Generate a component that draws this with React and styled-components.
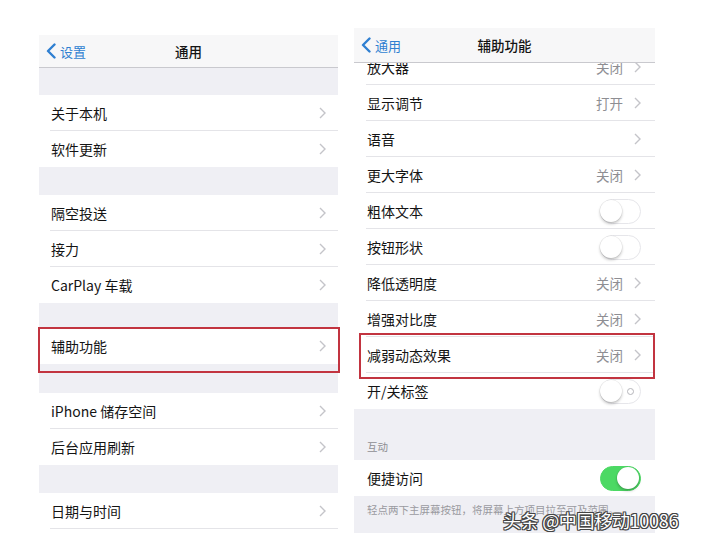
import React from "react";
import styled, { createGlobalStyle } from "styled-components";

const Global = createGlobalStyle`
  html, body { margin: 0; padding: 0; background: #ffffff; }
  body { font-family: "Noto Sans CJK SC", "Noto Sans", sans-serif; color: #111; }
`;

const Page = styled.div`
  position: relative;
  width: 701px;
  height: 544px;
  overflow: hidden;
  display: flex;
  align-items: flex-start;
  gap: 16px;
  padding-left: 39px;
  box-sizing: border-box;
`;

const Panel = styled.div`
  width: ${(p) => p.$w}px;
  margin-top: ${(p) => p.$top}px;
  background: #efeff4;
  display: flex;
  flex-direction: column;
`;

const NavBar = styled.div`
  height: ${(p) => p.$h}px;
  background: #f7f7f8;
  border-bottom: 1px solid #c9c9ce;
  display: grid;
  grid-template-columns: 1fr auto 1fr;
  align-items: center;
  box-sizing: border-box;
  position: relative;
  z-index: 2;
`;

const Back = styled.div`
  display: flex;
  align-items: center;
  gap: 4px;
  padding-left: 7px;
  color: #2f7fd1;
  font-size: 13px;
`;

const Title = styled.div`
  font-size: 13.5px;
  font-weight: 500;
  color: #141414;
`;

const Gap = styled.div`
  height: ${(p) => p.$h}px;
  background: #efeff4;
  display: flex;
  align-items: flex-end;
  padding: 0 13px ${(p) => (p.$label ? 6 : 0)}px;
  font-size: 10.5px;
  color: #8e8e93;
  box-sizing: border-box;
`;

const Footer = styled.div`
  height: 37px;
  background: #efeff4;
  padding: 6px 13px 0;
  box-sizing: border-box;
  font-size: 10.5px;
  color: #9a9aa0;
`;

const Group = styled.div`
  background: #fff;
  display: flex;
  flex-direction: column;
`;

const Scroll = styled.div`
  overflow: hidden;
  display: flex;
  flex-direction: column;
`;

const Row = styled.div`
  position: relative;
  height: 36px;
  flex-shrink: 0;
  display: flex;
  align-items: center;
  padding: 0 ${(p) => p.$pr}px 0 ${(p) => p.$pl}px;
  margin-top: ${(p) => p.$mt || 0}px;
  background: #fff;
  font-size: 14px;
  color: #141414;
  box-sizing: border-box;
  &::after {
    content: "";
    display: ${(p) => (p.$last ? "none" : "block")};
    position: absolute;
    left: ${(p) => p.$pl - 1}px;
    right: 0;
    bottom: 0;
    height: 1px;
    background: #e4e4e8;
  }
`;

const Label = styled.span`
  flex: 1;
`;

const Value = styled.span`
  color: #8e8e93;
  font-size: 13.5px;
  margin-right: 11px;
`;

const Highlight = styled.div`
  position: absolute;
  top: ${(p) => p.$t}px;
  bottom: ${(p) => p.$b}px;
  left: ${(p) => p.$l}px;
  right: ${(p) => p.$r}px;
  border: 2px solid #c23440;
  pointer-events: none;
  z-index: 3;
`;

const Track = styled.div`
  position: relative;
  width: 41px;
  height: 25px;
  border-radius: 13px;
  box-sizing: border-box;
  background: ${(p) => (p.$on ? "#4cd964" : "#fff")};
  border: 1.5px solid ${(p) => (p.$on ? "#4cd964" : "#e6e6ea")};
`;

const Knob = styled.div`
  position: absolute;
  top: 0;
  left: ${(p) => (p.$on ? "16px" : "-1px")};
  width: 22px;
  height: 22px;
  border-radius: 50%;
  background: #fff;
  box-shadow: 0 2px 3px rgba(0, 0, 0, 0.22), 0 0 0 0.5px rgba(0, 0, 0, 0.08);
`;

const OnOffMark = styled.div`
  position: absolute;
  right: 6px;
  top: 8px;
  width: 5px;
  height: 5px;
  border-radius: 50%;
  border: 1.2px solid #b5b5ba;
`;

const Watermark = styled.div`
  position: absolute;
  left: 503px;
  top: 507px;
  font-size: 18px;
  color: #fff;
  letter-spacing: -0.3px;
  white-space: nowrap;
  text-shadow: 1px 0 0 #444, -1px 0 0 #444, 0 1px 0 #444, 0 -1px 0 #444,
    1px 1px 0 #444, -1px -1px 0 #444, 1px -1px 0 #444, -1px 1px 0 #444;
`;

const Chevron = () => (
  <svg width="7" height="12" viewBox="0 0 7 12">
    <polyline points="1,1 6,6 1,11" fill="none" stroke="#c4c4c9" strokeWidth="1.4" />
  </svg>
);

const BackChevron = () => (
  <svg width="10" height="16" viewBox="0 0 10 16">
    <polyline points="8.5,1.5 2,8 8.5,14.5" fill="none" stroke="#2f7fd1" strokeWidth="2.4" strokeLinecap="round" strokeLinejoin="round" />
  </svg>
);

const Toggle = ({ on, mark }) => (
  <Track $on={on}>
    {mark && <OnOffMark />}
    <Knob $on={on} />
  </Track>
);

const LRow = ({ text, last, children }) => (
  <Row $pl={12} $pr={12} $last={last}>
    <Label>{text}</Label>
    <Chevron />
    {children}
  </Row>
);

const RRow = ({ text, value, toggle, on, mark, last, mt, chevron = true, children }) => (
  <Row $pl={13} $pr={14} $last={last} $mt={mt}>
    <Label>{text}</Label>
    {value && <Value>{value}</Value>}
    {toggle ? <Toggle on={on} mark={mark} /> : chevron && <Chevron />}
    {children}
  </Row>
);

export default function App() {
  return (
    <>
      <Global />
      <Page>
        <Panel $w={299} $top={35}>
          <NavBar $h={33}>
            <Back>
              <BackChevron />
              <span>设置</span>
            </Back>
            <Title>通用</Title>
            <div />
          </NavBar>
          <Gap $h={27} />
          <Group>
            <LRow text="关于本机" />
            <LRow text="软件更新" last />
          </Group>
          <Gap $h={28} />
          <Group>
            <LRow text="隔空投送" />
            <LRow text="接力" />
            <LRow text="CarPlay 车载" last />
          </Group>
          <Gap $h={25} />
          <Group>
            <LRow text="辅助功能" last>
              <Highlight $t={-1} $b={-9} $l={-1} $r={-2} />
            </LRow>
          </Group>
          <Gap $h={29} />
          <Group>
            <LRow text="iPhone 储存空间" />
            <LRow text="后台应用刷新" last />
          </Group>
          <Gap $h={28} />
          <Group>
            <LRow text="日期与时间" />
          </Group>
        </Panel>

        <Panel $w={301} $top={28}>
          <NavBar $h={35}>
            <Back>
              <BackChevron />
              <span>通用</span>
            </Back>
            <Title>辅助功能</Title>
            <div />
          </NavBar>
          <Scroll>
            <RRow text="放大器" value="关闭" mt={-14} />
            <RRow text="显示调节" value="打开" />
            <RRow text="语音" />
            <RRow text="更大字体" value="关闭" />
            <RRow text="粗体文本" toggle />
            <RRow text="按钮形状" toggle />
            <RRow text="降低透明度" value="关闭" />
            <RRow text="增强对比度" value="关闭" />
            <RRow text="减弱动态效果" value="关闭">
              <Highlight $t={-4} $b={-6} $l={5} $r={0} />
            </RRow>
            <RRow text="开/关标签" toggle mark last />
          </Scroll>
          <Gap $h={51} $label>互动</Gap>
          <Group>
            <RRow text="便捷访问" toggle on last />
          </Group>
          <Footer>轻点两下主屏幕按钮，将屏幕上方项目拉至可及范围。</Footer>
        </Panel>
        <Watermark>头条 @中国移动10086</Watermark>
      </Page>
    </>
  );
}
